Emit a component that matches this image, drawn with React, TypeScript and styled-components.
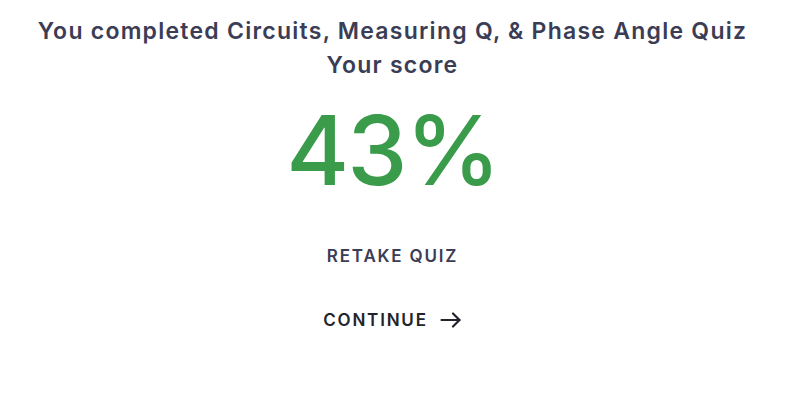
import * as React from 'react';
import styled, { createGlobalStyle } from 'styled-components';

const GlobalStyle = createGlobalStyle`
  html, body {
    margin: 0;
    padding: 0;
    background: #ffffff;
  }
  body {
    font-family: Inter, "Open Sans", "Liberation Sans", sans-serif;
  }
`;

const Container = styled.div`
  width: 785px;
  height: 408px;
  display: flex;
  flex-direction: column;
  align-items: center;
  padding-top: 14px;
  box-sizing: border-box;
`;

const Title = styled.h1`
  margin: 0;
  font-size: 23px;
  line-height: 34px;
  font-weight: 600;
  color: #3a3d55;
  text-align: center;
  letter-spacing: 1.25px;
`;

const Score = styled.div`
  margin-top: 16px;
  font-size: 96px;
  line-height: 104px;
  font-weight: 500;
  color: #3a9c4b;
  letter-spacing: -2px;
`;

const Button = styled.button<{ $dark?: boolean }>`
  display: flex;
  align-items: center;
  gap: 12px;
  border: none;
  background: none;
  padding: 0;
  font-family: inherit;
  font-size: 17px;
  font-weight: 600;
  letter-spacing: 1.8px;
  color: ${(p) => (p.$dark ? '#22232b' : '#3a3d55')};
  cursor: pointer;
`;

const Actions = styled.div`
  margin-top: 44px;
  display: flex;
  flex-direction: column;
  align-items: center;
  gap: 44px;
`;

const App: React.FC = () => {
  return (
    <Container>
      <GlobalStyle />
      <Title>
        You completed Circuits, Measuring Q, &amp; Phase Angle Quiz
        <br />
        Your score
      </Title>
      <Score>43%</Score>
      <Actions>
        <Button>RETAKE QUIZ</Button>
        <Button $dark>
          CONTINUE
          <svg width="22" height="16" viewBox="0 0 22 16" fill="none" stroke="currentColor" strokeWidth="2.2" strokeLinecap="round" strokeLinejoin="round">
            <path d="M1.5 8h18" />
            <path d="M13 1.5 19.5 8 13 14.5" />
          </svg>
        </Button>
      </Actions>
    </Container>
  );
};

export default App;
